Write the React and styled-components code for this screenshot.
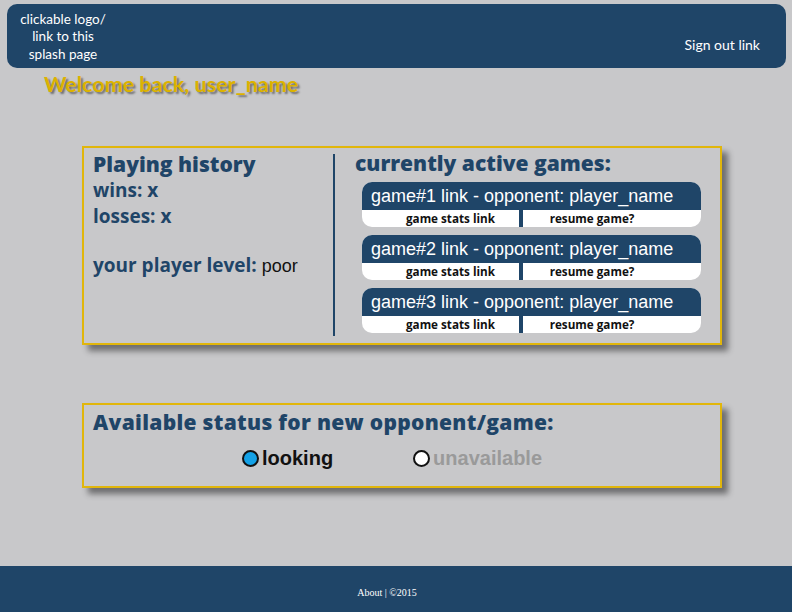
import React from "react";
import styled, { createGlobalStyle } from "styled-components";

const Global = createGlobalStyle`
  html, body { margin: 0; padding: 0; background: #c8c8ca; }
  body { font-family: "Open Sans", "Lato", sans-serif; }
  #root { min-height: 100vh; display: flex; flex-direction: column; }
`;

const NAVY = "#1f4568";
const GOLD = "#e1b60b";

const Page = styled.div`
  min-height: 100vh;
  display: flex;
  flex-direction: column;
`;

const Header = styled.header`
  margin: 4px 6px 0 7px;
  height: 64px;
  background: ${NAVY};
  border-radius: 10px;
  display: flex;
  align-items: center;
  justify-content: space-between;
  padding: 0 26px 0 13px;
  box-sizing: border-box;
  color: #fff;
`;

const Logo = styled.a`
  width: 86px;
  text-align: center;
  font-size: 13.5px;
  line-height: 17.5px;
  color: #fff;
  text-decoration: none;
  font-family: "Lato", sans-serif;
  padding-top: 2px;
`;

const SignOut = styled.a`
  font-family: "Lato", sans-serif;
  font-size: 14px;
  color: #fff;
  text-decoration: none;
  padding-top: 16px;
`;

const Welcome = styled.h1`
  margin: 4px 0 0 44px;
  font-size: 21.5px;
  line-height: 24px;
  font-weight: 700;
  color: #dcb200;
  text-shadow: 2px 2px 2px rgba(0, 0, 0, 0.45);
  font-family: "Lato", sans-serif;
`;

const Card = styled.section`
  margin: ${(p) => p.$top}px 0 0 82px;
  width: 640px;
  box-sizing: border-box;
  border: 2px solid ${GOLD};
  box-shadow: 6px 6px 6px rgba(0, 0, 0, 0.45);
`;

const HistoryCard = styled(Card)`
  display: grid;
  grid-template-columns: 249px 2px 1fr;
  height: 199px;
`;

const LeftCol = styled.div`
  padding: 3px 0 0 9px;
  color: ${NAVY};
`;

const Title = styled.h2`
  margin: 0;
  font-family: "Open Sans", sans-serif;
  font-size: 21px;
  line-height: 26px;
  font-weight: 800;
  color: ${NAVY};
  letter-spacing: ${(p) => p.$ls || "0px"};
`;

const Stat = styled.div`
  font-family: "Open Sans", sans-serif;
  font-size: 19px;
  line-height: 26px;
  font-weight: 700;
  margin-top: ${(p) => p.$gap || 0}px;
`;

const Plain = styled.span`
  font-family: "Liberation Sans", Arial, sans-serif;
  font-weight: 400;
  font-size: 18px;
  color: #111;
`;

const Divider = styled.div`
  background: ${NAVY};
  margin: 6px 0 7px;
  width: 1.5px;
`;

const RightCol = styled.div`
  padding: 2px 19px 0 20px;
`;

const GameList = styled.div`
  display: flex;
  flex-direction: column;
  gap: 8px;
  margin: 6px 0 0 7px;
`;

const Game = styled.div`
  border-radius: 10px;
  overflow: hidden;
  background: #fff;
`;

const GameHead = styled.a`
  display: block;
  height: 28px;
  background: ${NAVY};
  color: #fff;
  font-family: "Liberation Sans", Arial, sans-serif;
  font-size: 18px;
  line-height: 28px;
  padding-left: 9px;
  text-decoration: none;
`;

const GameRow = styled.div`
  display: grid;
  grid-template-columns: 157px 4px 1fr;
  height: 17px;
`;

const RowLink = styled.a`
  text-align: center;
  font-family: "Open Sans", sans-serif;
  font-size: 11.7px;
  line-height: 17px;
  font-weight: 700;
  color: #111;
  text-decoration: none;
  padding: ${(p) => (p.$side === "left" ? "0 0 0 20px" : "0 40px 0 0")};
`;

const RowBar = styled.div`
  background: ${NAVY};
`;

const StatusCard = styled(Card)`
  height: 85px;
  padding: 4px 9px 0;
`;

const Radios = styled.div`
  display: flex;
  margin: 12px 0 0 149px;
  gap: 80px;
`;

const RadioLabel = styled.label`
  display: flex;
  align-items: center;
  gap: 3px;
  font-family: "Liberation Sans", Arial, sans-serif;
  font-weight: 700;
  font-size: 20px;
  color: ${(p) => (p.$active ? "#111" : "#9a9a9a")};
`;

const Dot = styled.span`
  width: 13px;
  height: 13px;
  border-radius: 50%;
  border: 2px solid #111;
  background: ${(p) => (p.$on ? "#14a1e6" : "#fff")};
  display: inline-block;
`;

const Footer = styled.footer`
  margin-top: auto;
  height: 46px;
  background: ${NAVY};
  display: flex;
  align-items: center;
  justify-content: center;
  font-family: "Liberation Serif", "Times New Roman", serif;
  font-size: 10px;
  color: #fff;
  padding: 6px 18px 0 0;
  box-sizing: border-box;
`;

const games = [1, 2, 3];

export default function App() {
  return (
    <Page>
      <Global />
      <Header>
        <Logo href="#">
          clickable logo/
          <br />
          link to this
          <br />
          splash page
        </Logo>
        <SignOut href="#">Sign out link</SignOut>
      </Header>
      <Welcome>Welcome back, user_name</Welcome>

      <HistoryCard $top={50}>
        <LeftCol>
          <Title>Playing history</Title>
          <Stat>wins: x</Stat>
          <Stat>losses: x</Stat>
          <Stat $gap={23}>
            your player level: <Plain>poor</Plain>
          </Stat>
        </LeftCol>
        <Divider />
        <RightCol>
          <Title>currently active games:</Title>
          <GameList>
            {games.map((n) => (
              <Game key={n}>
                <GameHead href="#">game#{n} link - opponent: player_name</GameHead>
                <GameRow>
                  <RowLink href="#" $side="left">game stats link</RowLink>
                  <RowBar />
                  <RowLink href="#" $side="right">resume game?</RowLink>
                </GameRow>
              </Game>
            ))}
          </GameList>
        </RightCol>
      </HistoryCard>

      <StatusCard $top={58}>
        <Title $ls="0.3px">Available status for new opponent/game:</Title>
        <Radios>
          <RadioLabel $active>
            <Dot $on />
            looking
          </RadioLabel>
          <RadioLabel>
            <Dot />
            unavailable
          </RadioLabel>
        </Radios>
      </StatusCard>

      <Footer>About | ©2015</Footer>
    </Page>
  );
}
